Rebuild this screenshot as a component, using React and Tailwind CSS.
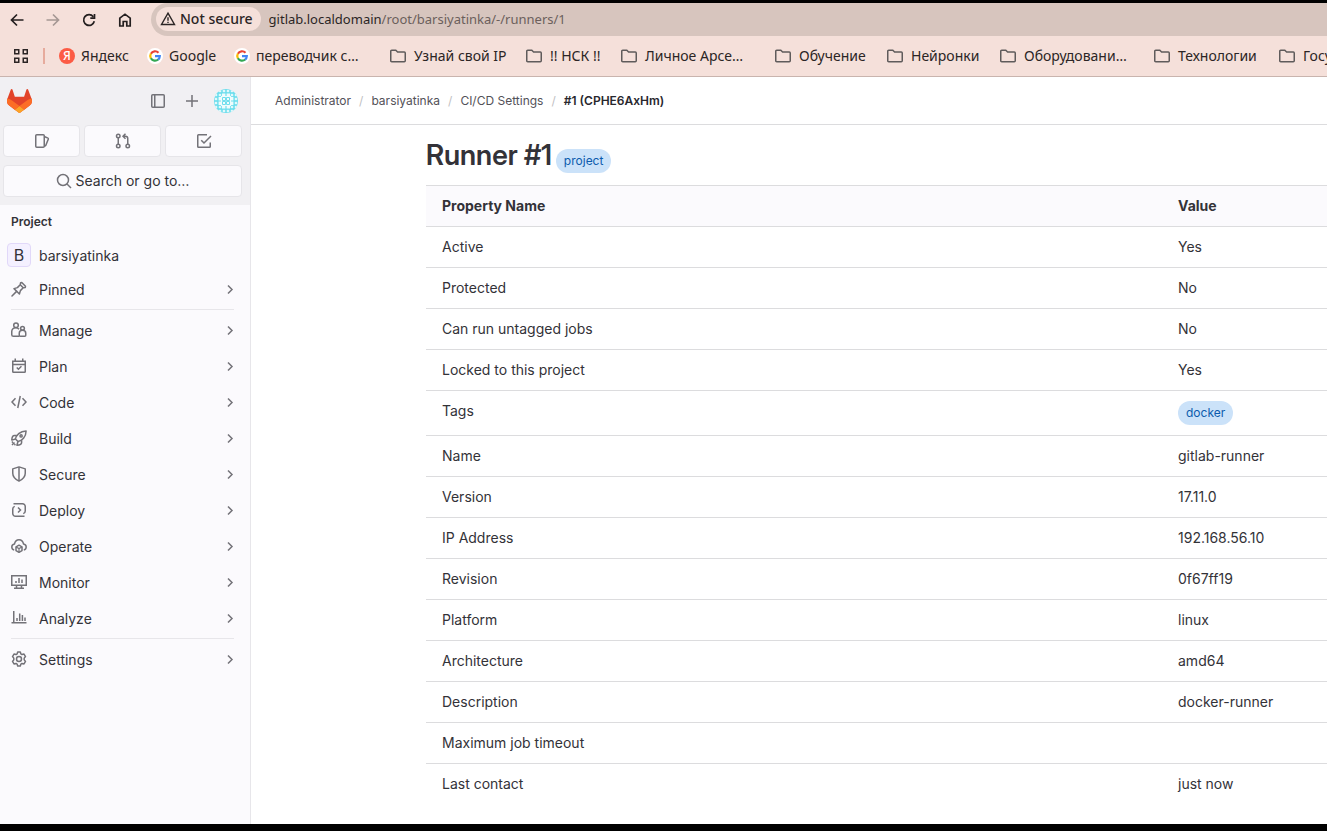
import React from "react";

function Icon({ children, className = "size-4", size = 16 }) {
  return (
    <svg
      viewBox={`0 0 ${size} ${size}`}
      className={`shrink-0 ${className}`}
      fill="none"
      stroke="currentColor"
      strokeWidth="1.5"
      aria-hidden="true"
    >
      {children}
    </svg>
  );
}

const icons = {
  pin: (
    <>
      <path d="M1 15l4.6-4.6" strokeLinecap="round" />
      <path d="M3 7.6l5.4 5.4 1-3.4 2.8-2.8 2.1-.4.2-1.2-3.7-3.7-1.2.2-.4 2.1-2.8 2.8z" strokeLinejoin="round" />
      <path d="M9.2 3.8l3 3" />
    </>
  ),
  users: (
    <>
      <circle cx="5" cy="3.2" r="2.3" />
      <path d="M8.3 14.25H2.5c-.9 0-1.75-.6-1.75-1.6V9.5C.75 7.4 2.5 5.7 4.8 5.7c1.3 0 2.5.6 3.2 1.5" />
      <circle cx="11.5" cy="6.3" r="1.9" />
      <path d="M8.25 11.3c0-1.7 1.4-3 3.25-3s3.25 1.3 3.25 3v2c0 .6-.4.95-1 .95h-4.5c-.6 0-1-.35-1-.95z" />
    </>
  ),
  plan: (
    <>
      <path d="M1.75 3.25h12.5v10.25a.75.75 0 0 1-.75.75h-11a.75.75 0 0 1-.75-.75zM1.75 6.5h12.5M4.25.5v2.5M11.75.5v2.5" />
      <path d="M5.75 9.5l1.7 1.7 3-2.9" />
    </>
  ),
  code: <path d="M4.5 4.25L1 8l3.5 3.75M11.5 4.25L15 8l-3.5 3.75M9.25 2l-2.5 12" />,
  rocket: (
    <>
      <path d="M4.5 9c.6-3.9 4.4-7.9 10.6-8.1C15 7.1 11 10.9 7 11.5z" strokeLinejoin="round" />
      <path d="M5.7 5.4H3.5c-1.5 0-2.6 2-2.7 4.7L4.5 9M10.6 10.3v2.2c0 1.5-2 2.6-4.7 2.7L7 11.5M1 15l2.5-2.5M.9 12.6l1-1M3.4 15.1l1-1" strokeLinejoin="round" />
      <circle cx="10.1" cy="5.9" r="1.1" />
    </>
  ),
  shield: (
    <>
      <path d="M8 .9l6.25 2v4.3c0 3.4-2.5 6-6.25 7.9C4.25 13.2 1.75 10.6 1.75 7.2V2.9z" strokeLinejoin="round" />
      <path d="M8 1v14" />
    </>
  ),
  deploy: (
    <>
      <path d="M2.5 1.75h9a2.75 2.75 0 0 1 2.75 2.75v4.5a2.75 2.75 0 0 1-2 2.65" />
      <path d="M3.75 4.35a2.75 2.75 0 0 0-2 2.65v4.5a2.75 2.75 0 0 0 2.75 2.75h9" />
      <path d="M7 5.5L9.5 8 7 10.5" />
    </>
  ),
  cloud: (
    <>
      <path d="M3.2 11.9A3 3 0 0 1 .8 9a3.1 3.1 0 0 1 2.7-3.1C4 3.4 5.8 1.8 8 1.8s4 1.6 4.5 4.1A3.1 3.1 0 0 1 15.2 9a3 3 0 0 1-2.4 2.9" />
      <path d="M8 7.2l3 1.6v3.8l-3 1.7-3-1.7V8.8z" strokeLinejoin="round" />
      <path d="M5 9l3 1.6L11 9M8 10.6v3.6" strokeWidth="1.2" />
    </>
  ),
  monitor: (
    <path d="M.75 1.75h14.5v9.5H.75zM5.5 11.5v2.5M10.5 11.5v2.5M3 14.25h10M5 7v2M8 4v5M11 5.5V9" />
  ),
  chart: <path d="M2.75 1v12.25M.5 12.75h15M6 8v3M8.7 3.5V11M11.4 5v6M14 7.5V11" />,
  settings: (
    <>
      <path
        d="M6.7.95h2.6l.6 2 1 .6 2.1-.5 1.5 2.5-1.3 1.6v1.7l1.3 1.6-1.5 2.5-2.1-.5-1 .6-.6 2H6.7l-.6-2-1-.6-2.1.5-1.5-2.5 1.3-1.6V7.15L1.5 5.55 3 3.05l2.1.5 1-.6z"
        strokeLinejoin="round"
      />
      <circle cx="8" cy="8" r="2.5" />
    </>
  ),
  issues: (
    <>
      <rect x="1.75" y="1.75" width="8.5" height="12.5" rx="1" />
      <path d="M10.25 3.5l3.7 1.6c.4.2.5.5.4.9l-2.6 6.5c-.2.5-.6.7-1.5.75" />
    </>
  ),
  merge: (
    <>
      <circle cx="3.25" cy="3" r="1.75" />
      <circle cx="3.25" cy="13" r="1.75" />
      <circle cx="12.75" cy="13" r="1.75" />
      <path d="M3.25 4.75v6.5M12.75 11.25V5.5a2.25 2.25 0 0 0-2.25-2.25H8.5M10.5.75L8 3.25l2.5 2.5" />
    </>
  ),
  todo: (
    <path d="M11 1.75H2.5a.75.75 0 0 0-.75.75v11c0 .4.35.75.75.75h11a.75.75 0 0 0 .75-.75V9.5M5.25 7.25l2.75 2.75 7-7" />
  ),
  panel: (
    <>
      <rect x="1.75" y="1.75" width="12.5" height="12.5" rx="1" />
      <path d="M4.75 2v12" />
    </>
  ),
  plus: <path d="M8 2v12M2 8h12" />,
  search: (
    <>
      <circle cx="7" cy="7" r="5.5" />
      <path d="M11 11l4 4" />
    </>
  ),
  chevron: <path d="M6 4.500L10 8.500l-4 4" />,
};

function Tanuki() {
  return (
    <svg viewBox="0 0 25 24" className="w-[25px] h-6" aria-hidden="true">
      <path d="m24.507 9.5-.034-.09L21.082.562a.896.896 0 0 0-1.694.091l-2.29 7.01H7.825L5.535.653a.898.898 0 0 0-1.694-.09L.451 9.411.416 9.5a6.297 6.297 0 0 0 2.09 7.278l.012.01.03.022 5.16 3.867 2.56 1.935 1.554 1.176a1.051 1.051 0 0 0 1.268 0l1.555-1.176 2.56-1.935 5.197-3.89.014-.01A6.297 6.297 0 0 0 24.507 9.5Z" fill="#E24329" />
      <path d="m24.507 9.5-.034-.09a11.44 11.44 0 0 0-4.56 2.051l-7.447 5.632 4.742 3.584 5.197-3.89.014-.01A6.297 6.297 0 0 0 24.507 9.5Z" fill="#FC6D26" />
      <path d="m7.707 20.677 2.56 1.935 1.555 1.176a1.051 1.051 0 0 0 1.268 0l1.555-1.176 2.56-1.935-4.743-3.584-4.755 3.584Z" fill="#FCA326" />
      <path d="M5.01 11.461a11.43 11.43 0 0 0-4.56-2.05L.416 9.5a6.297 6.297 0 0 0 2.09 7.278l.012.01.03.022 5.16 3.867 4.745-3.584-7.444-5.632Z" fill="#FC6D26" />
    </svg>
  );
}

const ringCells = [
  [4, 0], [8, 0], [12, 0], [16, 0],
  [4, 20], [8, 20], [12, 20], [16, 20],
  [0, 4], [0, 8], [0, 12], [0, 16],
  [20, 4], [20, 8], [20, 12], [20, 16],
  [4, 4], [16, 4], [4, 16], [16, 16],
];

function Identicon() {
  return (
    <svg viewBox="0 0 24 24" className="size-6 rounded-full" aria-hidden="true">
      <rect width="24" height="24" fill="#6fdeed" />
      <g fill="#effcfd">
        {ringCells.map(([x, y]) => (
          <path key={`${x}-${y}`} d={`M${x + 2} ${y + 0.4}l1.6 1.6-1.6 1.6-1.6-1.6z`} />
        ))}
        <path d="M8 4.600h3.400v2.400H8zM12.600 4.600H16v2.400h-3.400zM8 17h3.400v2.400H8zM12.600 17H16v2.400h-3.400zM4.600 8H7v3.400H4.600zM4.600 12.600H7V16H4.600zM17 8h2.400v3.400H17zM17 12.600h2.400V16H17z" />
        <rect x="7" y="7" width="10" height="10" />
      </g>
      <g fill="none" stroke="#6fdeed">
        <path d="M8.500 8.500h3v3h-3zM12.500 8.500h3v3h-3zM8.500 12.500h3v3h-3zM12.500 12.500h3v3h-3z" />
      </g>
    </svg>
  );
}

function GoogleMark() {
  return (
    <svg viewBox="0 0 16 16" className="size-4 shrink-0" aria-hidden="true">
      <circle cx="8" cy="8" r="8" fill="#fff" />
      <g fill="none" strokeWidth="2.2">
        <path d="M11.5 4.7A4.8 4.8 0 0 0 3.9 5.7" stroke="#ea4335" />
        <path d="M3.9 5.6a4.8 4.8 0 0 0 0 4.8" stroke="#fbbc05" />
        <path d="M3.9 10.3a4.8 4.8 0 0 0 7.3 1.2" stroke="#34a853" />
        <path d="M11.1 11.6A4.7 4.7 0 0 0 12.8 8.2H8" stroke="#4285f4" />
      </g>
    </svg>
  );
}

function YandexMark() {
  return (
    <span className="flex size-4 shrink-0 items-center justify-center rounded-full bg-[#fc5b45] text-xs leading-4 font-medium text-white">
      Я
    </span>
  );
}

function FolderMark() {
  return (
    <svg viewBox="0 0 16 16" className="mr-0.5 size-4 shrink-0" fill="none" stroke="#5f5b5b" strokeWidth="1.5" aria-hidden="true">
      <path d="M.75 3.2c0-.5.4-.95.95-.95h4.1l1.8 1.75h6.7c.5 0 .95.4.95.95v7.85c0 .5-.4.95-.95.95H1.7c-.5 0-.95-.4-.95-.95z" />
    </svg>
  );
}

const bookmarks = [
  { title: "Яндекс", mark: <YandexMark />, width: "w-[88px]" },
  { title: "Google", mark: <GoogleMark />, width: "w-[87px]" },
  { title: "переводчик с…", mark: <GoogleMark />, width: "w-[156px]" },
  { title: "Узнай свой IP", mark: <FolderMark />, width: "w-[136px]" },
  { title: "!! НСК !!", mark: <FolderMark />, width: "w-[95px]" },
  { title: "Личное Арсе…", mark: <FolderMark />, width: "w-[154px]" },
  { title: "Обучение", mark: <FolderMark />, width: "w-[112px]" },
  { title: "Нейронки", mark: <FolderMark />, width: "w-[113px]" },
  { title: "Оборудовани…", mark: <FolderMark />, width: "w-[154px]" },
  { title: "Технологии", mark: <FolderMark />, width: "w-[125px]" },
  { title: "Госуслуги", mark: <FolderMark />, width: "w-[125px]" },
];

function BrowserBar() {
  return (
    <header className="border-t-[3px] border-b border-t-black border-b-[#c9b4ae] bg-[#f5e0da] font-['Noto_Sans','Open_Sans',sans-serif] text-sm text-[#2b2525]">
      <div className="flex h-[33px] items-center">
        <nav className="flex w-[151px] shrink-0 items-center gap-5 pl-[9px]" aria-label="Browser">
          <button aria-label="Back" className="text-[#241f1f]">
            <Icon><path d="M14.5 8H3M8 2.5L2.5 8 8 13.5" strokeWidth="1.7" /></Icon>
          </button>
          <button aria-label="Forward" className="text-[#a59894]">
            <Icon><path d="M1.5 8H13M8 2.5L13.5 8 8 13.5" strokeWidth="1.7" /></Icon>
          </button>
          <button aria-label="Reload" className="text-[#241f1f]">
            <Icon><path d="M13.3 9.3A5.4 5.4 0 1 1 12.3 4.7M13.5 2v4.2H9.3" strokeWidth="1.7" /></Icon>
          </button>
          <button aria-label="Home" className="text-[#241f1f]">
            <Icon><path d="M2.8 6.2L8 2.2l5.2 4V14H9.8V9.5H6.2V14H2.8z" strokeWidth="1.7" /></Icon>
          </button>
        </nav>
        <div className="flex h-full min-w-0 flex-1 items-center gap-2 rounded-l-full bg-[#d7c5be] pb-0.5 pl-[5px]">
          <button className="flex h-6 shrink-0 items-center gap-1 rounded-full bg-[#f5e0da] pr-2 pl-1 font-medium">
            <Icon>
              <path d="M8 2.2L14.5 13.5h-13z" strokeWidth="1.4" />
              <path d="M8 6.2v3.6M8 10.8v1.3" strokeWidth="1.4" />
            </Icon>
            Not secure
          </button>
          <p className="truncate text-[13px] leading-5 text-[#6b5f5c]">
            <span className="text-[#2b2525]">gitlab.localdomain</span>/root/barsiyatinka/-/runners/1
          </p>
        </div>
      </div>
      <nav className="flex h-10 items-center overflow-hidden pl-[13px]" aria-label="Bookmarks">
        <button aria-label="All apps" className="shrink-0 text-[#2b2525]">
          <Icon><path d="M1.75 1.75h4v4h-4zM10.25 1.75h4v4h-4zM1.75 10.25h4v4h-4zM10.25 10.25h4v4h-4z" /></Icon>
        </button>
        <span className="mr-3.5 ml-3.5 h-4 w-0.5 shrink-0 bg-[#e6ab9d]" />
        {bookmarks.map((b) => (
          <a key={b.title} href="#" className={`flex shrink-0 items-center gap-1.5 whitespace-nowrap ${b.width}`}>
            {b.mark}
            {b.title}
          </a>
        ))}
      </nav>
    </header>
  );
}

function NavItem({ icon, label }) {
  return (
    <li>
      <button className="flex h-9 w-full items-center gap-3 pr-3 pl-[11px] text-left">
        <Icon className="size-4 text-[#737278]">{icons[icon]}</Icon>
        <span className="flex-1 pt-0.5">{label}</span>
        <Icon className="size-4 text-[#737278]">{icons.chevron}</Icon>
      </button>
    </li>
  );
}

function Divider() {
  return <li className="my-0.5 mr-4 ml-[11px] h-px bg-[#e7e6ea]" aria-hidden="true" />;
}

const sections = [
  ["users", "Manage"],
  ["plan", "Plan"],
  ["code", "Code"],
  ["rocket", "Build"],
  ["shield", "Secure"],
  ["deploy", "Deploy"],
  ["cloud", "Operate"],
  ["monitor", "Monitor"],
  ["chart", "Analyze"],
];

const boxed = "flex h-8 flex-1 items-center justify-center rounded border border-[#e6e5e9] bg-[#fbfafd]";

function Sidebar() {
  return (
    <aside className="w-[251px] shrink-0 border-r border-[#e7e6ea] bg-[#fbfafd]">
      <div className="bg-[#f1f0f3] pr-2 pb-2 pl-[3px] text-[#737278]">
        <div className="flex h-12 items-center pr-1 pl-1">
          <a href="#" aria-label="Homepage" className="mr-auto"><Tanuki /></a>
          <button aria-label="Hide sidebar"><Icon>{icons.panel}</Icon></button>
          <button aria-label="Create new" className="mr-3.5 ml-[18px]"><Icon>{icons.plus}</Icon></button>
          <button aria-label="User menu"><Identicon /></button>
        </div>
        <div className="flex gap-1">
          <a href="#" aria-label="Assigned issues" className={boxed}><Icon>{icons.issues}</Icon></a>
          <a href="#" aria-label="Merge requests" className={boxed}><Icon>{icons.merge}</Icon></a>
          <a href="#" aria-label="To-Do List" className={boxed}><Icon>{icons.todo}</Icon></a>
        </div>
        <button className={`${boxed} mt-2 w-full gap-1`}>
          <Icon>{icons.search}</Icon>
          <span className="text-[#333238]">Search or go to…</span>
        </button>
      </div>
      <nav aria-label="Project navigation">
        <h2 className="flex h-[34px] items-center pl-[11px] text-xs font-semibold">Project</h2>
        <ul>
          <li>
            <a href="#" className="flex h-8 items-center gap-2 pl-[7px]">
              <span className="flex size-6 items-center justify-center rounded border border-[#e1d8f9] bg-[#f4f0ff] text-base leading-4">B</span>
              <span className="pt-0.5">barsiyatinka</span>
            </a>
          </li>
          <NavItem icon="pin" label="Pinned" />
          <Divider />
          {sections.map(([icon, label]) => (
            <NavItem key={label} icon={icon} label={label} />
          ))}
          <Divider />
          <NavItem icon="settings" label="Settings" />
        </ul>
      </nav>
    </aside>
  );
}

function Badge({ children }) {
  return (
    <span className="inline-flex h-6 items-center rounded-full bg-[#cbe2f9] px-2 text-xs text-[#0b5cad]">{children}</span>
  );
}

const properties = [
  ["Active", "Yes"],
  ["Protected", "No"],
  ["Can run untagged jobs", "No"],
  ["Locked to this project", "Yes"],
  ["Tags", <Badge key="docker">docker</Badge>],
  ["Name", "gitlab-runner"],
  ["Version", "17.11.0"],
  ["IP Address", "192.168.56.10"],
  ["Revision", "0f67ff19"],
  ["Platform", "linux"],
  ["Architecture", "amd64"],
  ["Description", "docker-runner"],
  ["Maximum job timeout", ""],
  ["Last contact", "just now"],
];

const crumbs = ["Administrator", "barsiyatinka", "CI/CD Settings"];

function Content() {
  return (
    <div className="min-w-0 flex-1">
      <nav className="flex h-12 items-center border-b border-[#dcdcde] pl-6 text-xs" aria-label="Breadcrumb">
        <ol className="flex items-center gap-2 text-[#535158]">
          {crumbs.map((c) => (
            <li key={c} className="flex items-center gap-2">
              <a href="#">{c}</a>
              <span className="text-[#bfbfc3]">/</span>
            </li>
          ))}
          <li className="font-semibold text-[#28272d]">#1 (CPHE6AxHm)</li>
        </ol>
      </nav>
      <main className="pl-[175px]">
        <div className="flex h-[60px] items-center gap-1">
          <h1 className="font-['Inter_Display','Inter',sans-serif] text-[28px] leading-9 font-semibold">Runner #1</h1>
          <span className="flex pt-3"><Badge>project</Badge></span>
        </div>
        <table className="w-full border-collapse text-left">
          <thead>
            <tr className="border-t border-[#dcdcde] bg-[#fbfafd]">
              <th scope="col" className="w-[736px] px-4 py-2.5 font-bold">Property Name</th>
              <th scope="col" className="px-4 py-2.5 font-bold">Value</th>
            </tr>
          </thead>
          <tbody>
            {properties.map(([name, value]) => (
              <tr key={name} className="border-t border-[#dcdcde] align-top">
                <td className="px-4 py-2.5">{name}</td>
                <td className="px-4 py-2.5">{typeof value === "string" ? value : <div className="flex">{value}</div>}</td>
              </tr>
            ))}
          </tbody>
        </table>
      </main>
    </div>
  );
}

export default function App() {
  return (
    <div className="flex min-h-screen flex-col overflow-hidden border-b-[7px] border-black bg-white">
      <BrowserBar />
      <div className="flex flex-1 font-['Inter','Noto_Sans',sans-serif] text-sm text-[#333238]">
        <Sidebar />
        <Content />
      </div>
    </div>
  );
}
